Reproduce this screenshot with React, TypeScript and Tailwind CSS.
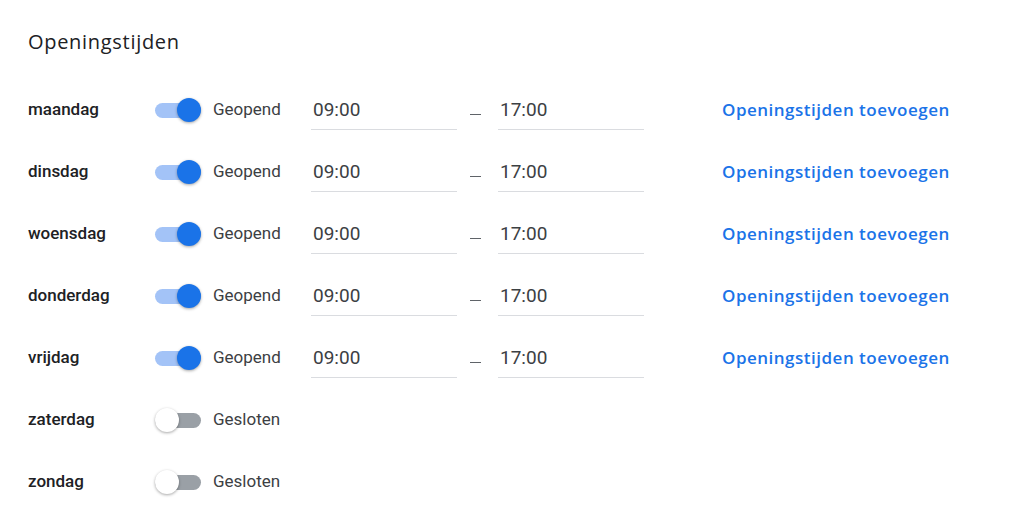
import React from "react";

const days = [
  { name: "maandag", open: true },
  { name: "dinsdag", open: true },
  { name: "woensdag", open: true },
  { name: "donderdag", open: true },
  { name: "vrijdag", open: true },
  { name: "zaterdag", open: false },
  { name: "zondag", open: false },
];

function Toggle({ on }: { on: boolean }) {
  return (
    <div className="relative h-6 w-[46px] shrink-0">
      <div
        className={`absolute left-0 right-0 top-[5px] h-[15px] rounded-full ${on ? "bg-[#a3c3f7]" : "bg-[#9aa0a6]"}`}
      />
      <div
        className={`absolute top-0 h-6 w-6 rounded-full shadow-[0_1px_3px_rgba(0,0,0,0.35)] ${on ? "right-0 bg-[#1a73e8]" : "left-0 bg-white"}`}
      />
    </div>
  );
}

function TimeField({ value }: { value: string }) {
  return (
    <div className="flex h-[40px] w-[146px] items-end border-b border-[#dadce0] pb-[10px] pl-[2px] text-[19px] leading-none text-[#3c4043]">
      {value}
    </div>
  );
}

export default function App() {
  return (
    <div className="min-h-[524px] w-full bg-white pl-[28px] font-['Roboto',sans-serif]">
      <div className="flex h-[79px] items-start pt-[28px]">
        <h2 className="font-['Open_Sans',sans-serif] text-[20px] leading-[28px] tracking-[0.7px] text-[#202124]">
          Openingstijden
        </h2>
      </div>
      {days.map((d) => (
        <div key={d.name} className="flex h-[62px] items-center">
          <div className="w-[127px] text-[17px] font-medium text-[#202124]">{d.name}</div>
          <Toggle on={d.open} />
          <div className="ml-3 w-[98px] text-[17px] text-[#3c4043]">
            {d.open ? "Geopend" : "Gesloten"}
          </div>
          {d.open && (
            <>
              <TimeField value="09:00" />
              <div className="flex w-[41px] justify-start pl-[13px] pt-[8px]">
                <span className="block h-px w-[11px] bg-[#5f6368]" />
              </div>
              <TimeField value="17:00" />
              <a className="ml-[78px] font-['Open_Sans',sans-serif] text-[17px] font-semibold tracking-[0.5px] text-[#1a73e8]">
                Openingstijden toevoegen
              </a>
            </>
          )}
        </div>
      ))}
    </div>
  );
}
